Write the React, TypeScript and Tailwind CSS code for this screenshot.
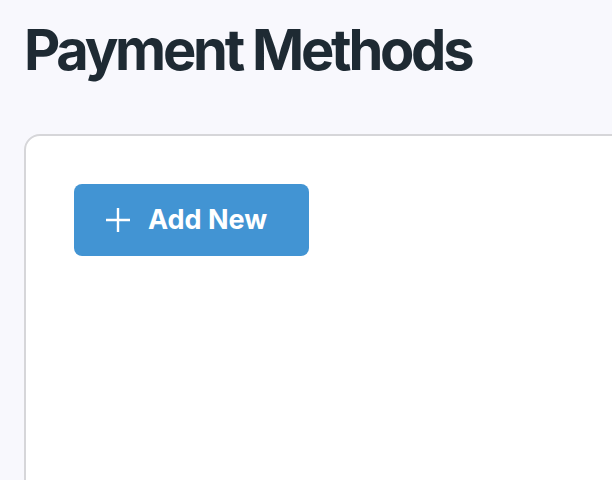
export default function App() {
  return (
    <div className="h-screen bg-[#f8f8fd] px-6 pt-[16px] font-['Inter',sans-serif] overflow-hidden">
      <h1 className="text-[56px] leading-[68px] font-bold tracking-[-0.058em] text-[#1e2a33]">
        Payment Methods
      </h1>

      <div className="mt-[50px] w-[700px] h-[400px] rounded-2xl border-2 border-[#d6d6d9] bg-white px-12 pt-12">
        <button className="flex h-[72px] w-[235px] items-center gap-[18px] rounded-lg bg-[#4294d3] pl-8 text-[27px] font-bold text-white">
          <svg width="24" height="24" viewBox="0 0 24 24" fill="none" stroke="currentColor" strokeWidth="2.4">
            <path d="M12 0v24M0 12h24" />
          </svg>
          Add New
        </button>
      </div>
    </div>
  );
}
